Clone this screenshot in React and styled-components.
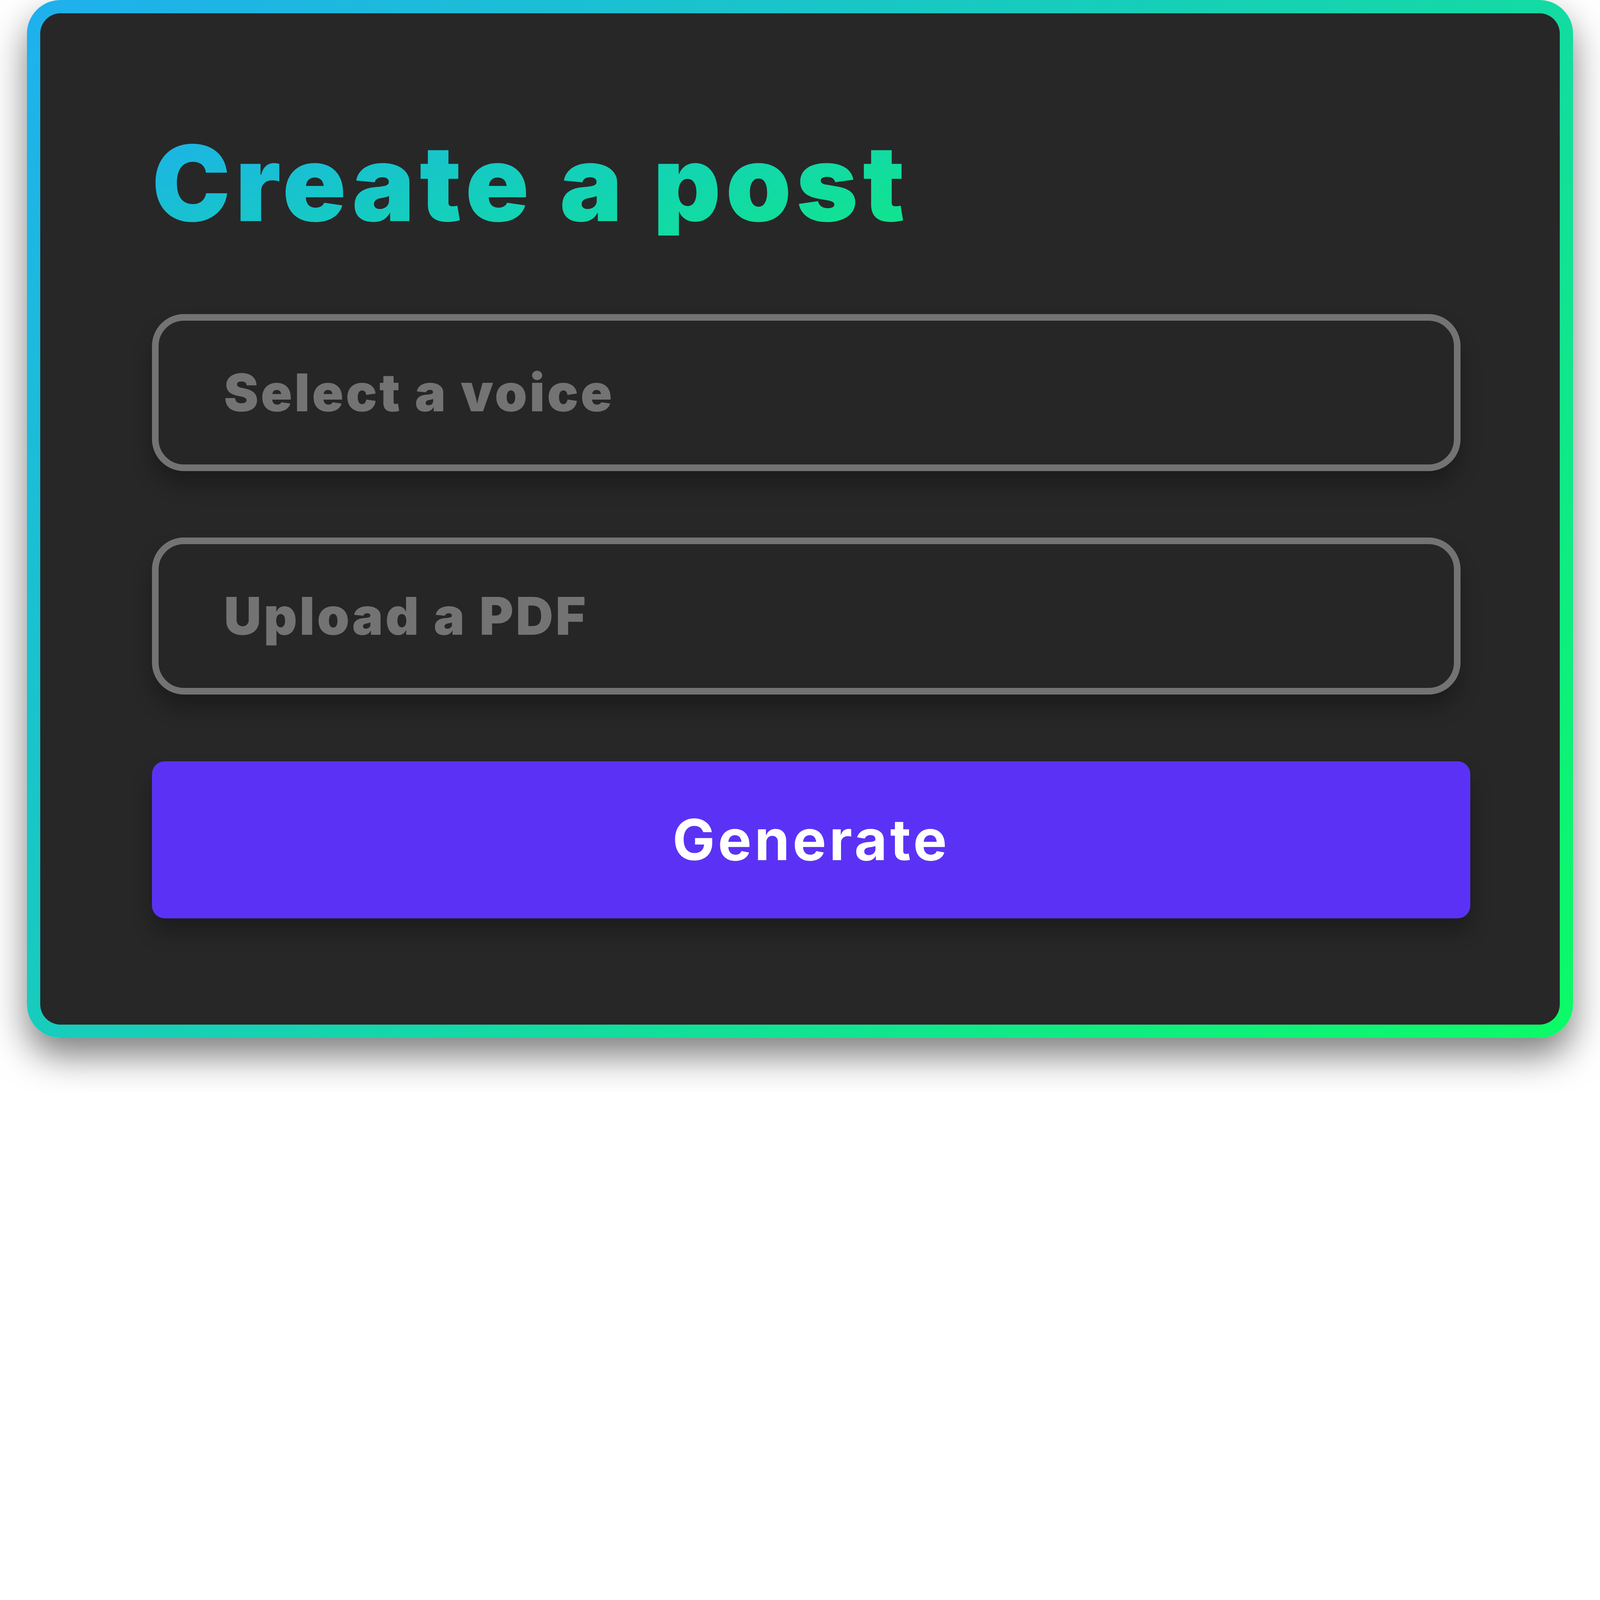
import styled, { createGlobalStyle } from 'styled-components';

// the reference was measured on a 7152px wide frame; keep every size relative to the viewport
const vw = (n) => `${(n / 71.52).toFixed(4)}vw`;

const GlobalStyle = createGlobalStyle`
  html, body {
    margin: 0;
    padding: 0;
    background: #ffffff;
    overflow: hidden;
  }

  body {
    font-family: Inter, "Noto Sans", sans-serif;
  }
`;

const Page = styled.div`
  box-sizing: border-box;
  width: 100vw;
  height: ${vw(4881)};
  padding: 0 ${vw(120)};
`;

const Card = styled.section`
  box-sizing: border-box;
  height: ${vw(4640)};
  border: ${vw(60)} solid transparent;
  border-radius: ${vw(150)};
  background:
    linear-gradient(#272727, #272727) padding-box,
    linear-gradient(135deg, #1fb0ee 0%, #15d3b0 50%, #0bfb66 100%) border-box;
  box-shadow: 0 ${vw(80)} ${vw(160)} rgba(0, 0, 0, 0.5);
`;

const Form = styled.form`
  display: flex;
  flex-direction: column;
  align-items: flex-start;
  padding: ${vw(525)} 0 0 ${vw(500)};
`;

const Title = styled.h1`
  margin: 0 0 ${vw(351)};
  display: inline-block;
  font-size: ${vw(469)};
  font-weight: 900;
  line-height: 1;
  letter-spacing: ${vw(22)};
  background: linear-gradient(160deg, #1db2e8 0%, #13d2b6 55%, #10e68a 100%);
  -webkit-background-clip: text;
  background-clip: text;
  color: transparent;
`;

const Fields = styled.div`
  display: flex;
  flex-direction: column;
  gap: ${vw(298)};
`;

const Field = styled.div`
  box-sizing: border-box;
  display: flex;
  align-items: center;
  width: ${vw(5850)};
  height: ${vw(701)};
  padding-left: ${vw(292)};
  border: ${vw(30)} solid #737373;
  border-radius: ${vw(143)};
  background: #262626;
  box-shadow: 0 ${vw(60)} ${vw(90)} rgba(0, 0, 0, 0.28);
  cursor: pointer;
`;

const Placeholder = styled.span`
  font-size: ${vw(232)};
  font-weight: 900;
  line-height: 1;
  letter-spacing: ${vw(10)};
  color: #737373;
`;

const GenerateButton = styled.button`
  box-sizing: border-box;
  width: ${vw(5893)};
  height: ${vw(703)};
  padding: 0;
  border: none;
  border-radius: ${vw(57)};
  background: #5b32f5;
  color: #ffffff;
  font-family: inherit;
  font-size: ${vw(253)};
  font-weight: 700;
  letter-spacing: ${vw(13)};
  box-shadow: 0 ${vw(60)} ${vw(90)} rgba(0, 0, 0, 0.28);
  cursor: pointer;
`;

export default function App() {
  return (
    <>
      <GlobalStyle />
      <Page>
        <Card>
          <Form onSubmit={(e) => e.preventDefault()}>
            <Title>Create a post</Title>
            <Fields>
              <Field>
                <Placeholder>Select a voice</Placeholder>
              </Field>
              <Field>
                <Placeholder>Upload a PDF</Placeholder>
              </Field>
              <GenerateButton type="submit">Generate</GenerateButton>
            </Fields>
          </Form>
        </Card>
      </Page>
    </>
  );
}
